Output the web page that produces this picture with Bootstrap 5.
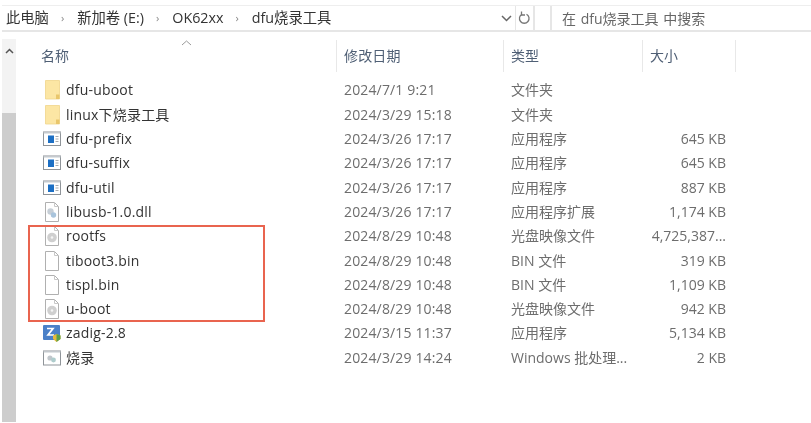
<!DOCTYPE html>
<html lang="zh-CN">
<head>
    <meta charset="UTF-8">
    <meta name="viewport" content="width=device-width, initial-scale=1.0">
    <title>dfu烧录工具</title>
    <link href="https://cdn.jsdelivr.net/npm/bootstrap@5.3.0/dist/css/bootstrap.min.css" rel="stylesheet">
    <style>
        html, body { height: 423px; overflow: hidden; }
        body {
            background: #fff;
            color: #3a3a3a;
            font-family: "Open Sans", "Noto Sans CJK SC", sans-serif;
            font-size: 14px;
        }
        .explorer { height: 423px; padding-top: 5px; filter: blur(.45px); }
        .top-bar { height: 27px; margin-left: 2px; border-top: 1px solid #eee; border-bottom: 2px solid #e6e6e6; }
        .crumbs { padding-left: 4px; font-size: 14.3px; color: #333; }
        .crumb-sep { color: #888; font-size: 11px; margin: 0 13px 0 12px; }
        .crumb-end { width: 496px; }
        .drop-box { width: 18px; border-right: 1px solid #e6e6e6; }
        .refresh-box { width: 19px; border-right: 2px solid #e6e6e6; }
        .search-box { margin-left: 15px; padding-left: 10px; border-left: 2px solid #e6e6e6; color: #666; font-size: 14px; flex: 1; word-spacing: 1px; }
        .side-bar { width: 14px; margin: 7px 0 0 2px; height: 383px; background: #f3f3f3; }
        .side-arrow { height: 24px; padding-top: 9px; }
        .side-thumb { margin-top: 50px; height: 309px; background: #cdcdcd; }
        .file-pane { flex: 1; }
        .sort-mark { position: absolute; left: 165px; top: 8px; }
        .col-head { display: grid; grid-template-columns: 321px 167px 139px 93px; height: 32px; margin-top: 8px; color: #4f5f75; }
        .file-line { display: grid; grid-template-columns: 321px 167px 139px 83px; height: 24.3px; }
        .cell-name { position: relative; padding-left: 50px; color: #333; letter-spacing: .2px; }
        .col-head .cell-name { padding-left: 25px; letter-spacing: 0; }
        .cell-date, .cell-type { padding-left: 7px; color: #6d6d6d; }
        .cell-date { letter-spacing: .15px; }
        .cell-size { text-align: right; color: #6d6d6d; }
        .col-head > div { border-right: 1px solid #e8e8e8; padding-top: 5px; color: #4f5f75; }
        .col-head .cell-size { padding-left: 7px; text-align: left; }
        .file-rows { margin-top: 5.8px; }
        .file-line svg { position: absolute; margin-left: -23px; margin-top: 1px; }
        .red-box { position: absolute; left: 28px; top: 225px; width: 237px; height: 97px; border: 2.5px solid #e9644f; }
    </style>
</head>
<body>
    <svg width="0" height="0" class="position-absolute">
        <symbol id="ic-folder" viewBox="0 0 18 20">
            <path d="M2.500 .5h14v18.500h-14z" fill="#fce6a4" stroke="#f0d68c" stroke-width=".8"/>
            <path d="M13 14.500h3.500v4.500H13z" fill="#e9c66c"/>
        </symbol>
        <symbol id="ic-app" viewBox="0 0 18 20">
            <rect x=".5" y="3" width="17" height="13.500" fill="#fff" stroke="#8f9499"/>
            <rect x=".5" y="3" width="17" height="1.500" fill="#c4c9ce"/>
            <rect x="5" y="6.500" width="6" height="7.500" fill="#1c6fc4"/>
            <path d="M12.500 7.500h3M12.500 10h3M12.500 12.500h3" stroke="#a4a9ae"/>
        </symbol>
        <symbol id="ic-dll" viewBox="0 0 18 20">
            <path d="M2.500 .5h9l4 4v15h-13z" fill="#fff" stroke="#b0b0b0"/>
            <path d="M11.500 .5v4h4" fill="none" stroke="#c8c8c8"/>
            <circle cx="7.500" cy="9.500" r="3.200" fill="#c6ced6"/>
            <circle cx="10.500" cy="13" r="2.700" fill="#a9c4dc"/>
        </symbol>
        <symbol id="ic-disc" viewBox="0 0 18 20">
            <path d="M2.500 .5h9l4 4v15h-13z" fill="#fff" stroke="#b0b0b0"/>
            <path d="M11.500 .5v4h4" fill="none" stroke="#c8c8c8"/>
            <circle cx="9" cy="11.500" r="4.800" fill="#cfcfcf"/>
            <circle cx="9" cy="11.500" r="1.300" fill="#f4f4f4"/>
        </symbol>
        <symbol id="ic-file" viewBox="0 0 18 20">
            <path d="M2.500 .5h9l4 4v15h-13z" fill="#fff" stroke="#b0b0b0"/>
            <path d="M11.500 .5v4h4" fill="none" stroke="#c8c8c8"/>
        </symbol>
        <symbol id="ic-zadig" viewBox="0 0 18 20">
            <rect x="0" y="2" width="17" height="15" rx="1" fill="#4a80c8"/>
            <path d="M4 5.500h6L5 12h6" fill="none" stroke="#fff" stroke-width="1.700"/>
            <path d="M13.500 11l4 1.500v3.500l-4 3-3.500-3v-3.500z" fill="#e7b93b"/>
            <path d="M13.500 11l4 1.500v3.500l-4 3z" fill="#58a04a"/>
        </symbol>
        <symbol id="ic-bat" viewBox="0 0 18 20">
            <rect x=".5" y="3" width="17" height="14" fill="#fff" stroke="#8f9499"/>
            <rect x=".5" y="3" width="17" height="1.500" fill="#c4c9ce"/>
            <circle cx="7" cy="10" r="2.600" fill="#c0c6cb"/>
            <circle cx="10.500" cy="12" r="2.400" fill="#aecccc"/>
        </symbol>
    </svg>

    <div class="explorer position-relative">
        <!-- Address bar -->
        <div class="top-bar d-flex align-items-stretch">
            <div class="crumb-end d-flex align-items-center crumbs text-nowrap">
                <span>此电脑</span><span class="crumb-sep">›</span>
                <span>新加卷 (E:)</span><span class="crumb-sep">›</span>
                <span>OK62xx</span><span class="crumb-sep">›</span>
                <span>dfu烧录工具</span>
            </div>
            <div class="drop-box d-flex align-items-center justify-content-center">
                <svg width="11" height="7" viewBox="0 0 11 7"><path d="M1 1l4.500 4.500L10 1" fill="none" stroke="#666" stroke-width="1.500"/></svg>
            </div>
            <div class="refresh-box d-flex align-items-center justify-content-center">
                <svg width="13" height="14" viewBox="0 0 13 14"><path d="M8.500 3.200A4.800 4.800 0 1 1 4 3.200" fill="none" stroke="#777" stroke-width="1.300"/><path d="M3.500 .5v3.500H7" fill="none" stroke="#777" stroke-width="1.300"/></svg>
            </div>
            <div class="search-box d-flex align-items-center text-nowrap">在 dfu烧录工具 中搜索</div>
        </div>

        <div class="d-flex">
            <!-- Scrollbar -->
            <div class="side-bar">
                <div class="side-arrow d-flex justify-content-center">
                    <svg width="9" height="6" viewBox="0 0 9 6"><path d="M1 5l3.500-3.500L8 5" fill="none" stroke="#555" stroke-width="1.500"/></svg>
                </div>
                <div class="side-thumb"></div>
            </div>

            <!-- File list -->
            <div class="file-pane position-relative">
                <svg class="sort-mark" width="11" height="6" viewBox="0 0 11 6"><path d="M1 5l4.500-4L10 5" fill="none" stroke="#999"/></svg>
                <div class="col-head">
                    <div class="cell-name">名称</div>
                    <div class="cell-date">修改日期</div>
                    <div class="cell-type">类型</div>
                    <div class="cell-size">大小</div>
                </div>
                <div class="file-rows" id="rows"></div>
            </div>
        </div>

        <div class="red-box"></div>
    </div>

    <script src="https://cdn.jsdelivr.net/npm/bootstrap@5.3.0/dist/js/bootstrap.bundle.min.js"></script>
    <script>
        const files = [
            ["ic-folder", "dfu-uboot", "2024/7/1 9:21", "文件夹", ""],
            ["ic-folder", "linux下烧录工具", "2024/3/29 15:18", "文件夹", ""],
            ["ic-app", "dfu-prefix", "2024/3/26 17:17", "应用程序", "645 KB"],
            ["ic-app", "dfu-suffix", "2024/3/26 17:17", "应用程序", "645 KB"],
            ["ic-app", "dfu-util", "2024/3/26 17:17", "应用程序", "887 KB"],
            ["ic-dll", "libusb-1.0.dll", "2024/3/26 17:17", "应用程序扩展", "1,174 KB"],
            ["ic-disc", "rootfs", "2024/8/29 10:48", "光盘映像文件", "4,725,387..."],
            ["ic-file", "tiboot3.bin", "2024/8/29 10:48", "BIN 文件", "319 KB"],
            ["ic-file", "tispl.bin", "2024/8/29 10:48", "BIN 文件", "1,109 KB"],
            ["ic-disc", "u-boot", "2024/8/29 10:48", "光盘映像文件", "942 KB"],
            ["ic-zadig", "zadig-2.8", "2024/3/15 11:37", "应用程序", "5,134 KB"],
            ["ic-bat", "烧录", "2024/3/29 14:24", "Windows 批处理...", "2 KB"]
        ];

        document.getElementById("rows").innerHTML = files.map(f => `
            <div class="file-line align-items-center">
                <div class="cell-name text-nowrap"><svg width="18" height="20"><use href="#${f[0]}"></use></svg>${f[1]}</div>
                <div class="cell-date text-nowrap">${f[2]}</div>
                <div class="cell-type text-nowrap">${f[3]}</div>
                <div class="cell-size text-nowrap">${f[4]}</div>
            </div>`).join("");
    </script>
</body>
</html>
